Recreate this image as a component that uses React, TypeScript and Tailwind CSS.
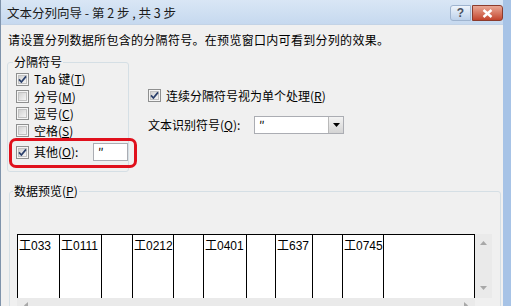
import React from "react";

const FONT = { fontFamily: '"Noto Sans CJK SC", "Liberation Sans", sans-serif' };

function CheckBox({ checked }: { checked: boolean }) {
  return (
    <svg width="13" height="13" viewBox="0 0 13 13" className="shrink-0">
      <defs>
        <linearGradient id="cbInner" x1="0" y1="0" x2="1" y2="1">
          <stop offset="0" stopColor="#cfcfcf" />
          <stop offset="1" stopColor="#f7f7f7" />
        </linearGradient>
      </defs>
      <rect x="0.5" y="0.5" width="12" height="12" fill="#f5f5f5" stroke="#8e8f8f" />
      <rect x="2.5" y="2.5" width="8" height="8" fill="url(#cbInner)" stroke="#c2c2c2" />
      {checked && (
        <path d="M3 6.4 L5.4 9 L10 3.4" fill="none" stroke="#2a3f6b" strokeWidth="1.7" />
      )}
    </svg>
  );
}

function Key({ k }: { k: string }) {
  return (
    <span>
      (<span className="underline">{k}</span>)
    </span>
  );
}

const cells = [
  { w: "w-[42px]", t: "工033" },
  { w: "w-[42px]", t: "工0111" },
  { w: "w-[31px]", t: "" },
  { w: "w-[41px]", t: "工0212" },
  { w: "w-[30px]", t: "" },
  { w: "w-[43px]", t: "工0401" },
  { w: "w-[29px]", t: "" },
  { w: "w-[37px]", t: "工637" },
  { w: "w-[30px]", t: "" },
  { w: "w-[41px]", t: "工0745" },
  { w: "flex-1", t: "" },
];

export default function App() {
  return (
    <div
      className="w-[511px] h-[306px] overflow-hidden flex flex-col bg-[#c9dbf0] border-l border-l-[#7f93ab] border-r-[8px] border-r-[#a7c3e6] text-[12px] text-black leading-[16px]"
      style={FONT}
    >
      {/* Title bar */}
      <div className="h-[24px] shrink-0 flex items-start bg-gradient-to-b from-[#d9e6f5] to-[#c6d9ef]">
        <div className="pl-[6px] pt-[5px] text-[12.5px] leading-[16px] text-[#1a1a1a] whitespace-pre">
          文本分列向导 - 第 2 步 , 共 3 步
        </div>
        <div className="ml-auto flex pt-[5px] gap-[1px]">
          <div className="w-[21px] h-[16px] rounded-l-[3px] border border-[#9fb4cf] bg-gradient-to-b from-[#eef4fb] to-[#bcd1ea] flex items-center justify-center text-[12px] font-bold text-[#4a5160] leading-none" style={{ fontFamily: '"Liberation Sans", sans-serif' }}>
            ?
          </div>
          <div className="w-[31px] h-[16px] rounded-r-[3px] border border-[#8b3b2c] bg-gradient-to-b from-[#e9a795] to-[#c2432c] flex items-center justify-center">
            <svg width="11" height="9" viewBox="0 0 11 9">
              <path d="M1.5 1 L9.5 8 M9.5 1 L1.5 8" stroke="#fff" strokeWidth="2.4" />
            </svg>
          </div>
        </div>
      </div>

      {/* Body */}
      <div className="flex-1 bg-[#f0f0f0] border-t border-t-[#c3d3e6] pl-[6px] pr-[2px] relative">
        <div className="mt-[7px] pl-[1px] tracking-[0.3px]">
          请设置分列数据所包含的分隔符号。在预览窗口内可看到分列的效果。
        </div>

        <div className="flex mt-[6px]">
          <fieldset className="w-[121px] border border-[#d5dfe5] rounded-[3px] pl-[5px] pb-[9px]">
            <legend className="px-[1px] leading-[16px]">分隔符号</legend>
            <div className="flex flex-col pl-[3px] pt-[1px] whitespace-nowrap">
              <div className="h-[17px] flex items-center gap-[5px]">
                <CheckBox checked />
                <span>
                  <span style={{ fontFamily: '"Liberation Mono", monospace' }}>Tab</span> 键<Key k="T" />
                </span>
              </div>
              <div className="h-[17px] flex items-center gap-[5px]">
                <CheckBox checked={false} />
                <span>分号<Key k="M" /></span>
              </div>
              <div className="h-[17px] flex items-center gap-[5px]">
                <CheckBox checked={false} />
                <span>逗号<Key k="C" /></span>
              </div>
              <div className="h-[17px] flex items-center gap-[5px]">
                <CheckBox checked={false} />
                <span>空格<Key k="S" /></span>
              </div>
              <div className="h-[20px] mt-[3px] flex items-center">
                <CheckBox checked />
                <span className="ml-[5px] w-[59px]">其他<Key k="O" />:</span>
                <div className="w-[35px] h-[18px] shrink-0 bg-white border border-[#abadb3] pl-[4px] leading-[16px]">
                  ″
                </div>
              </div>
            </div>
          </fieldset>

          <div className="ml-[19px] flex flex-col">
            <div className="mt-[33px] h-[17px] flex items-center gap-[5px]">
              <CheckBox checked />
              <span>连续分隔符号视为单个处理<Key k="R" /></span>
            </div>
            <div className="mt-[12px] h-[18px] flex items-center">
              <span className="w-[106px]">文本识别符号<Key k="Q" />:</span>
              <div className="w-[90px] h-[18px] bg-white border border-[#abadb3] flex">
                <div className="flex-1 pl-[4px] leading-[16px]">″</div>
                <div className="w-[15px] h-[16px] border-l border-[#b9b9b9] bg-gradient-to-b from-[#f3f3f3] to-[#d4d4d4] flex items-center justify-center">
                  <svg width="7" height="4" viewBox="0 0 7 4">
                    <path d="M0 0 L7 0 L3.5 4 Z" fill="#000" />
                  </svg>
                </div>
              </div>
            </div>
          </div>
        </div>

        <fieldset className="ml-[2px] mt-[11px] border border-[#d5dfe5] rounded-[3px] pl-[3px]">
          <legend className="px-[1px] leading-[16px]">数据预览<Key k="P" /></legend>
          <div className="ml-[4px] mt-[35px] w-[475px] flex flex-col">
            <div className="flex h-[64px]">
              <div className="w-[458px] flex bg-white border-t border-l border-black">
                {cells.map((c, i) => (
                  <div
                    key={i}
                    className={`${c.w} h-full border-r border-black pl-[1px] pt-[4px] leading-[14px]`}
                    style={{ fontFamily: '"Liberation Sans", "Noto Sans CJK SC", sans-serif' }}
                  >
                    {c.t}
                  </div>
                ))}
              </div>
              <div className="w-[17px] bg-[#eaeaea] flex flex-col items-center justify-between pt-[7px] pb-[8px]">
                <svg width="7" height="4" viewBox="0 0 7 4">
                  <path d="M0 4 L7 4 L3.5 0 Z" fill="#a8a8a8" />
                </svg>
                <svg width="7" height="4" viewBox="0 0 7 4">
                  <path d="M0 0 L7 0 L3.5 4 Z" fill="#a8a8a8" />
                </svg>
              </div>
            </div>
            <div className="h-[17px] bg-[#eaeaea] flex items-start justify-between px-[7px] pt-[4px] w-[458px]">
              <svg width="4" height="7" viewBox="0 0 4 7">
                <path d="M4 0 L4 7 L0 3.5 Z" fill="#a8a8a8" />
              </svg>
              <svg width="4" height="7" viewBox="0 0 4 7">
                <path d="M0 0 L0 7 L4 3.5 Z" fill="#a8a8a8" />
              </svg>
            </div>
          </div>
        </fieldset>

        {/* red annotation box */}
        <div className="absolute left-[8px] top-[113px] w-[128px] h-[30px] border-[3px] border-[#e0101c] rounded-[7px] pointer-events-none" />
      </div>
    </div>
  );
}
